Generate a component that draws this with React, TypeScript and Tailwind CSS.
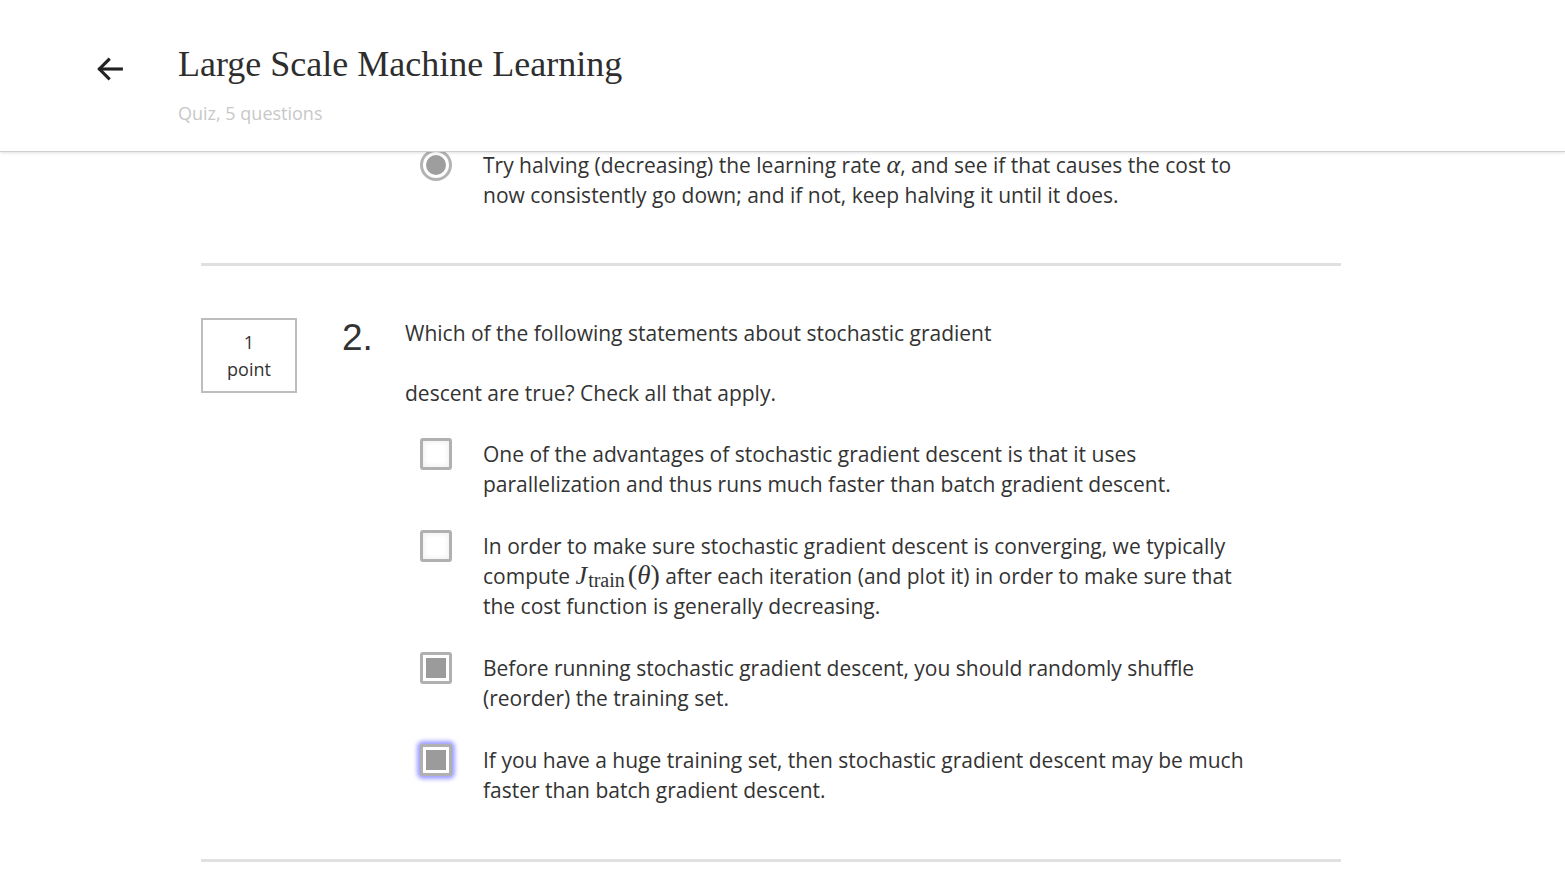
import { useState } from 'react';

const BODY = "font-['Open_Sans',sans-serif] text-[21px] leading-[30px] text-[#333]";

function Radio({ checked }: { checked: boolean }) {
  return (
    <div className="w-[32px] h-[32px] shrink-0 rounded-full border-[3px] border-[#b3b3b3] bg-white flex items-center justify-center">
      {checked && <div className="w-[20px] h-[20px] rounded-full bg-[#9e9e9e]" />}
    </div>
  );
}

function Checkbox({ checked, focused }: { checked: boolean; focused?: boolean }) {
  return (
    <div
      className={`w-[32px] h-[32px] shrink-0 rounded-[3px] border-[3px] border-[#b0b0b0] p-[3px] ${
        checked ? 'bg-white' : 'bg-white shadow-[inset_0_0_6px_rgba(0,0,0,0.09)]'
      } ${focused ? 'shadow-[0_0_4px_3px_rgba(105,105,255,0.65)]' : ''}`}
    >
      {checked && <div className="w-full h-full bg-[#9b9b9b]" />}
    </div>
  );
}

function Option({ control, children }: { control: React.ReactNode; children: React.ReactNode }) {
  return (
    <div className="flex items-start">
      <div className="w-[63px] shrink-0 flex -mt-[1px]">{control}</div>
      <div className={`${BODY} w-[776px]`}>{children}</div>
    </div>
  );
}

const Math = ({ children }: { children: React.ReactNode }) => (
  <span className="inline-block font-['Liberation_Serif',serif] text-[26px] leading-[26px] whitespace-nowrap">{children}</span>
);

export default function App() {
  const [answers] = useState([false, false, true, true]);

  return (
    <div className="min-h-[881px] bg-white overflow-hidden">
      <header className="relative z-10 h-[152px] bg-white border-b border-[#cfcfcf] shadow-[0_1px_3px_rgba(0,0,0,0.12)]">
        <div className="flex items-start pl-[93px] pt-[41px]">
          <svg width="34" height="34" viewBox="0 0 24 24" className="mt-[11px]" fill="none" stroke="#222" strokeWidth="2.2" strokeLinecap="square">
            <path d="M20 12H5" />
            <path d="M11 5.5L4.5 12L11 18.5" />
          </svg>
          <div className="ml-[51px]">
            <h1 className="font-['Liberation_Serif',serif] text-[36px] leading-[46px] text-[#2e2e2e]">
              Large Scale Machine Learning
            </h1>
            <div className="font-['Open_Sans',sans-serif] text-[18px] leading-[24px] text-[#c8c8c8] mt-[14px]">
              Quiz, 5 questions
            </div>
          </div>
        </div>
      </header>

      <main className="-mt-[2px] pl-[201px]">
        <div className="w-[1140px]">
          <div className="pl-[219px]">
            <Option control={<Radio checked />}>
              Try halving (decreasing) the learning rate <Math><i>α</i></Math>, and see if that causes the cost to now
              consistently go down; and if not, keep halving it until it does.
            </Option>
          </div>

          <div className="mt-[53px] h-[3px] bg-[#e0e0e0]" />

          <section className="pt-[52px] flex items-start">
            <div className="w-[96px] h-[75px] border-2 border-[#bdbdbd] flex flex-col items-center justify-center font-['Open_Sans',sans-serif] text-[18px] leading-[27px] text-[#333]">
              <span>1</span>
              <span>point</span>
            </div>
            <div className="ml-[45px] w-[63px] font-['Liberation_Sans',sans-serif] text-[37px] leading-[40px] text-[#333]">
              2.
            </div>
            <div>
              <p className={BODY}>Which of the following statements about stochastic gradient</p>
              <p className={`${BODY} mt-[30px]`}>descent are true? Check all that apply.</p>

              <div className="mt-[31px] pl-[15px] flex flex-col gap-[32px]">
                <Option control={<Checkbox checked={answers[0]} />}>
                  One of the advantages of stochastic gradient descent is that it uses parallelization and thus runs
                  much faster than batch gradient descent.
                </Option>
                <Option control={<Checkbox checked={answers[1]} />}>
                  In order to make sure stochastic gradient descent is converging, we typically compute{' '}
                  <Math>
                    <i>J</i>
                    <span className="text-[20px] relative top-[3px] ml-[1px]">train</span>
                    <span className="ml-[3px] text-[28px]">(</span>
                    <i className="text-[27px]">θ</i>
                    <span className="text-[28px]">)</span>
                  </Math>{' '}
                  after each iteration (and plot it) in order to make sure that the cost function is generally
                  decreasing.
                </Option>
                <Option control={<Checkbox checked={answers[2]} />}>
                  Before running stochastic gradient descent, you should randomly shuffle (reorder) the training set.
                </Option>
                <Option control={<Checkbox checked={answers[3]} focused />}>
                  If you have a huge training set, then stochastic gradient descent may be much faster than batch
                  gradient descent.
                </Option>
              </div>
            </div>
          </section>

          <div className="mt-[54px] h-[3px] bg-[#e0e0e0]" />
          <div className="h-[40px]" />
        </div>
      </main>
    </div>
  );
}
